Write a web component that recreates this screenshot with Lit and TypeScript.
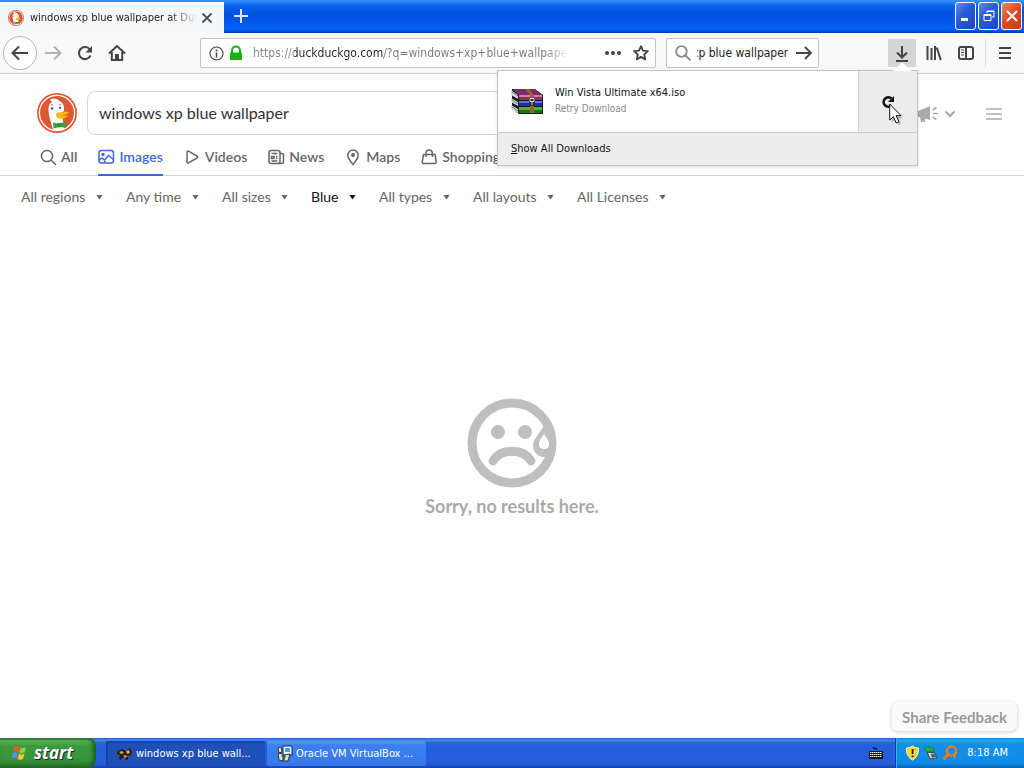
import { LitElement, html, css, svg } from "lit";
import { customElement, query } from "lit/decorators.js";
import { classMap } from "lit/directives/class-map.js";

const tabs = [
  { label: "All", icon: svg`<circle cx="7" cy="7" r="5.6"/><path d="M11 11l5 5"/>` },
  {
    label: "Images",
    active: true,
    icon: svg`<rect x="1" y="1.5" width="14.5" height="12.5" rx="2.5"/><circle cx="5" cy="5.5" r="1"/><path d="M1 11.5l3-2.5 2.5 2 4-4.5 5 4"/><path d="M5.5 13.5l2-1.5"/>`,
  },
  { label: "Videos", icon: svg`<path d="M3 3.2v9.6c0 1 .8 1.5 1.600 1l8.400-4.800c.9-.5.9-1.500 0-2L4.600 2.200C3.800 1.700 3 2.200 3 3.200z"/>` },
  {
    label: "News",
    icon: svg`<rect x="1" y="1.5" width="11" height="13" rx="2"/><path d="M12 4.500h2c1 0 1.500.5 1.500 1.500v6.500c0 1.200-.8 2-2 2H10M3.500 4.500h6M3.500 7.500h2.500v2H3.500zM8 7.500h1.500M8 9.500h1.500M3.500 12h6"/>`,
  },
  {
    label: "Maps",
    icon: svg`<path d="M8 15.500C5 12 2.800 9.300 2.800 6.300a5.200 5.200 0 0 1 10.400 0C13.200 9.300 11 12 8 15.500z"/><circle cx="8" cy="6" r="1.200" fill="currentColor"/>`,
  },
  {
    label: "Shopping",
    icon: svg`<path d="M2.500 5.500h11.500l1.300 7.500c.1.800-.4 1.500-1.300 1.500H2.500c-.9 0-1.400-.7-1.300-1.500z"/><path d="M5 8V4.500C5 2.500 6.300 1 8.200 1s3.200 1.500 3.200 3.500V8"/>`,
  },
];

const filters = ["All regions", "Any time", "All sizes", "Blue", "All types", "All layouts", "All Licenses"];

const duck = svg`
  <circle cx="20" cy="20" r="20" fill="#de5833"/>
  <circle cx="20" cy="20" r="18.300" fill="#fff"/>
  <circle cx="20" cy="20" r="17" fill="#de5833"/>
  <path d="M16 36.500C14.500 31 11.300 22 11.500 15.500c.1-3.500 1.500-5.500 3.500-6.500l-2-2.500c3.500-2 7.500-1 9.500 1.500 3 1.200 4.500 3.800 4.500 7.500 0 3-1.500 4.500-1.500 7.500 0 4 1.500 9 2 12.700-3.500 2-8 2.300-11.500.8z" fill="#fff"/>
  <circle cx="15" cy="15.500" r="1.200" fill="#2d4f8e"/><circle cx="23" cy="14.800" r="1.100" fill="#2d4f8e"/>
  <path d="M13.500 12.500c.8-.8 2-.9 2.700-.6M22 12c.7-.6 1.600-.5 2.200 0" fill="none" stroke="#5c76a8"/>
  <path d="M19 21.500c0-2 5-3 13-2.500-.8 1.900-4 2.600-7 3 2.500.8 4 .6 5.500.6-1 3-5.500 3.600-8.500 2.900-1.800-.4-3-2-3-4z" fill="#fdb813"/>
  <path d="M16 29.500l5.500 1.200 7.500-2 .5 6-7-.7-6 1.500z" fill="#3fa13f"/>
  <path d="M20.500 30.200h3v4h-3z" fill="#2e8532"/>`;

@customElement("app-root")
export class AppRoot extends LitElement {
  @query(".find-input") private findInput!: HTMLInputElement;

  static styles = css`
    :host {
      display: flex;
      flex-direction: column;
      height: 100vh;
      overflow: hidden;
      background: #fff;
      color: #222;
      font: 11px/16px "DejaVu Sans Condensed", "DejaVu Sans", sans-serif;
    }
    * { box-sizing: border-box; }
    button, input, select { font: inherit; color: inherit; border: 0; padding: 0; margin: 0; background: none; outline: none; }
    svg { display: block; flex: none; }
    .line { fill: none; stroke: currentColor; }

    .titlebar {
      display: flex;
      flex: none;
      height: 33px;
      padding-top: 2px;
      background: linear-gradient(#3a93ff 0, #2384fb 2px, #0663ea 6px, #0054e3 12px, #0055e8 20px, #0262f8 29px, #0050d8 31px, #003ab5 33px);
    }
    .tab { display: flex; align-items: center; width: 224px; padding: 0 9px 0 8px; background: #f6f7f9; color: #222; }
    .tab-title {
      flex: 1;
      margin: 0 3px 0 6px;
      white-space: nowrap;
      overflow: hidden;
      -webkit-mask-image: linear-gradient(to right, #000 140px, transparent 168px);
    }
    .close-tab, .new-tab { display: grid; place-items: center; }
    .close-tab { width: 16px; height: 16px; color: #444; }
    .new-tab { width: 34px; color: #d5e6ff; padding-bottom: 3px; }
    .window-buttons { display: flex; gap: 2px; margin-left: auto; padding-right: 2px; }
    .window-button {
      width: 21px;
      height: 28px;
      display: grid;
      place-items: center;
      color: #fff;
      border: 1px solid #fff;
      border-radius: 3px;
      background: linear-gradient(135deg, #5c8cf0, #2a5bdc 40%, #1b46c4);
    }
    .window-button.close { background: linear-gradient(135deg, #ee8a6c, #dc4d28 45%, #c23a16); }

    .toolbar {
      display: flex;
      flex: none;
      align-items: center;
      height: 41px;
      padding-left: 3px;
      background: #f9f9fa;
      border-bottom: 1px solid #d5d5d8;
      color: #444;
    }
    .tool { display: grid; place-items: center; width: 32px; height: 28px; flex: none; }
    .back { width: 34px; height: 34px; border: 1px solid #b4b4b6; border-radius: 50%; background: #fdfdfd; }
    .forward { color: #b0b0b0; }
    .stretch { flex: 0 1 67px; }
    .field { display: flex; align-items: center; height: 30px; border: 1px solid #c3c3c6; border-radius: 2px; background: #fff; }
    .address { flex: 1; min-width: 0; padding: 0 6px 0 8px; }
    .address-input {
      flex: 1;
      min-width: 0;
      height: 24px;
      margin: 0 32px 0 7px;
      font-size: 12px;
      color: transparent;
      background: linear-gradient(to right, #858585 41px, #222 41px, #222 131px, #777 131px, #777 292px, transparent 316px);
      -webkit-background-clip: text;
      background-clip: text;
    }
    .dots { margin-right: 12px; }
    .find { width: 153px; margin: 0 2px 0 10px; padding: 0 6px 0 8px; }
    .find-icon { color: #8a8a8a; }
    .find-input { flex: 1; min-width: 0; height: 24px; margin: 0 8px 0 6px; font-size: 12px; color: #222; }
    .downloads { position: relative; flex: none; margin-right: 2px; }
    .downloads-button { display: grid; place-items: center; width: 28px; height: 28px; background: #d5d5d6; }
    .menu { width: 39px; margin-left: 3px; border-left: 1px solid #dedee0; }

    .panel {
      position: absolute;
      z-index: 2;
      top: 31px;
      right: -2px;
      width: 421px;
      border: 1px solid #c4c4c4;
      background: #ededed;
      color: #111;
      box-shadow: 0 1px 3px #0002;
    }
    .panel::before {
      content: "";
      position: absolute;
      right: 6px;
      top: -9px;
      border: 9px solid transparent;
      border-top: 0;
      border-bottom-color: #fff;
    }
    .download { display: flex; align-items: stretch; height: 61px; background: #fff; }
    .archive { margin: 15px 11px 0 12px; }
    .download-text { flex: 1; padding-top: 14px; }
    .status { color: #8a8a8a; font-size: 10px; }
    .retry { display: grid; place-items: center; width: 59px; background: #ececec; border-left: 1px solid #cfcfcf; position: relative; }
    .pointer { position: absolute; left: 30px; top: 32px; }
    .show-all { display: block; width: 100%; height: 33px; padding: 0 13px; text-align: left; border-top: 1px solid #ccc; }

    main {
      flex: 1;
      display: flex;
      flex-direction: column;
      position: relative;
      min-height: 0;
      color: #666;
      font: 14px/20px Lato, "Open Sans", sans-serif;
    }
    .search-row { display: flex; align-items: center; padding: 17px 22px 0 37px; }
    .query { flex: 0 1 661px; height: 44px; margin-left: 10px; padding: 0 11px 2px; border: 1px solid #d6d6d6; border-radius: 8px; color: #333; font-size: 16px; }
    .page-tools { display: flex; align-items: center; margin: 2px 0 0 auto; color: #aaa; }
    .chevron { margin: 0 30px 0 4px; }
    nav { display: flex; gap: 21px; height: 41px; padding: 0 40px; border-bottom: 1px solid #d6d6d6; }
    nav a { display: flex; align-items: center; gap: 4px; height: 41px; padding-top: 5px; color: #666; font-weight: 600; text-decoration: none; border-bottom: 2px solid transparent; }
    nav a.active { color: #3f68da; border-color: #3969d5; }
    .filters { display: flex; gap: 23px; padding: 11px 21px 0; }
    .filters label { display: flex; align-items: center; gap: 10px; }
    .filters select { appearance: none; height: 20px; }
    .arrow { width: 7px; height: 5px; background: currentColor; clip-path: polygon(0 0, 100% 0, 50% 100%); }
    .blue { color: #111; }
    .empty { flex: 1; display: flex; flex-direction: column; align-items: center; justify-content: center; gap: 8px; color: #aaa; font-size: 18px; font-weight: 700; padding-bottom: 32px; }
    .empty p { margin: 0; }
    .feedback {
      position: absolute;
      right: 7px;
      bottom: 7px;
      height: 29px;
      padding: 0 10px;
      border-radius: 6px;
      background: #fafafa;
      color: #999;
      font-size: 15px;
      font-weight: 700;
      box-shadow: 0 1px 4px #0003;
    }

    footer {
      display: flex;
      flex: none;
      align-items: stretch;
      height: 30px;
      color: #fff;
      background: linear-gradient(#2358cc 0, #3f8cf3 2px, #2860dc 5px, #245edb 12px, #245edc 26px, #1941a5 30px);
    }
    .start {
      display: flex;
      align-items: center;
      gap: 5px;
      width: 96px;
      padding: 0 0 0 11px;
      border-radius: 0 8px 8px 0;
      background: linear-gradient(#2c7a2c 0, #5cb35a 3px, #3b9a3b 8px, #37943a 22px, #256c27 30px);
      box-shadow: inset -3px 0 4px #1d5c20;
      font: italic 700 17px/20px "Open Sans", sans-serif;
      text-shadow: 1px 1px 1px #123;
    }
    .tasks { display: flex; gap: 2px; padding: 3px 0 2px 10px; flex: 1; }
    .task { display: flex; align-items: center; gap: 3px; width: 159px; padding: 0 9px; border-radius: 2px; background: linear-gradient(#5a9bff, #3b80f0 4px, #3578ea); white-space: nowrap; }
    .task.pressed { padding-left: 10px; background: #1e50b8; box-shadow: inset 1px 1px 2px #123a8c; }
    .keyboard { align-self: center; margin-right: 12px; }
    .tray { display: flex; align-items: center; gap: 3px; padding: 0 16px 0 9px; border-left: 1px solid #0b3fa0; box-shadow: inset 1px 0 #35b5f5; background: linear-gradient(#0e7dd4 0, #18b0f5 2px, #1290e8 6px, #0f8ae6 25px, #0a5fb5 30px); }
    .clock { margin-left: 6px; white-space: nowrap; }
  `;

  protected firstUpdated() {
    this.findInput.scrollLeft = this.findInput.scrollWidth;
  }

  private renderTitlebar() {
    return html`<header class="titlebar">
      <div class="tab">
        <svg width="16" height="16" viewBox="0 0 40 40">${duck}</svg>
        <span class="tab-title">windows xp blue wallpaper at Duck</span>
        <button class="close-tab" aria-label="Close tab"><svg class="line" width="10" height="10" stroke-width="1.8"><path d="M.5.5l9 9M9.500.5l-9 9"/></svg></button>
      </div>
      <button class="new-tab" aria-label="New tab"><svg class="line" width="14" height="14" stroke-width="2"><path d="M7 0v14M0 7h14"/></svg></button>
      <div class="window-buttons">
        <button class="window-button" aria-label="Minimize"><svg width="14" height="14"><path d="M2 9h7v3H2z" fill="#fff"/></svg></button>
        <button class="window-button" aria-label="Restore"><svg class="line" width="14" height="14"><path d="M5 4V2h7v6h-2M5 2.500h7M2 5.500h7v6H2zM2 6.500h7"/></svg></button>
        <button class="window-button close" aria-label="Close"><svg class="line" width="14" height="14" stroke-width="2"><path d="M2 2l10 10M12 2L2 12"/></svg></button>
      </div>
    </header>`;
  }

  private renderPanel() {
    return html`<section class="panel" aria-label="Downloads">
      <div class="download">
        <svg class="archive" width="34" height="31" viewBox="0 0 34 31">
          <path d="M2 3h23l8 6v19H9l-7-5z" fill="#1b1620"/>
          <path d="M1 4l7 5v4L1 9zM1 12l7 4v4l-7-4zM1 19l7 4v4l-7-4z" fill="#d5d5d5"/>
          <path d="M2 6l6 4M2 14l6 4M2 21l6 4" stroke="#777"/>
          <path d="M2 3h23l7 6H9z" fill="#7a2a66"/><path d="M9 9h23v2H9z" fill="#d07ab5"/><path d="M9 11h23v3H9z" fill="#8e2c72"/>
          <path d="M9 15h23v2H9z" fill="#5576f0"/><path d="M9 17h23v3H9z" fill="#1e2fae"/>
          <path d="M9 21h23v3H9z" fill="#41b83a"/><path d="M9 24h23v3H9z" fill="#157517"/>
          <path d="M15 3h4l5 6v18h-4V9z" fill="#9a6233"/>
          <path d="M19 12h6v8h-6z" fill="#2b2b2b"/><path d="M20 12.500h4v3h-4zM22 15v4" fill="none" stroke="#ddd"/>
        </svg>
        <div class="download-text">
          <div>Win Vista Ultimate x64.iso</div>
          <div class="status">Retry Download</div>
        </div>
        <button class="retry" aria-label="Retry download">
          <svg class="line" width="14" height="14" stroke-width="2.600"><path d="M10.500 10.500a4.700 4.700 0 1 1 0-7"/><path d="M13 1v6H7z" fill="#111" stroke="none"/></svg>
          <svg class="pointer" width="14" height="22"><path d="M2.500 3v17l4-3.500 2.800 5.500 3-1.500-2.800-5h4z" fill="#0003"/><path d="M.7 1v16l3.700-3.300 2.800 6.300 2.800-1.300-2.800-6H12z" fill="#fff" stroke="#111"/></svg>
        </button>
      </div>
      <button class="show-all"><u>S</u>how All Downloads</button>
    </section>`;
  }

  private renderToolbar() {
    return html`<div class="toolbar">
      <button class="tool back" aria-label="Back"><svg class="line" width="18" height="16" stroke-width="2"><path d="M17 8H2M8 1.500L1.500 8 8 14.500"/></svg></button>
      <button class="tool forward" aria-label="Forward"><svg class="line" width="18" height="16" stroke-width="2"><path d="M1 8h15M10 1.500L16.500 8 10 14.500"/></svg></button>
      <button class="tool" aria-label="Reload"><svg class="line" width="16" height="16" stroke-width="2"><path d="M13.500 10.500a6 6 0 1 1-.7-6"/><path d="M15 1v6.500H8.500z" fill="currentColor" stroke="none"/></svg></button>
      <button class="tool" aria-label="Home"><svg class="line" width="18" height="18" stroke-width="2"><path d="M1 9.500L9 2l8 7.500M3.800 8v8h10.400V8" /><path d="M7 10h4v6H7z" fill="currentColor" stroke="none"/></svg></button>
      <div class="stretch"></div>
      <div class="field address">
        <svg class="line" width="15" height="15"><circle cx="7.500" cy="7.500" r="6.500" stroke-width="1.200"/><path d="M7.500 6.500v5M7.500 3.500v2" stroke-width="1.600"/></svg>
        <svg width="22" height="16"><path d="M8 8V5.500a4 4 0 0 1 8 0V8" fill="none" stroke="#12b312" stroke-width="2"/><path d="M6 7.500h12V15H6z" fill="#12b312"/></svg>
        <input class="address-input" aria-label="Address" value="https://duckduckgo.com/?q=windows+xp+blue+wallpaper" />
        <svg class="dots" width="16" height="6" fill="currentColor"><circle cx="2" cy="3" r="2"/><circle cx="8" cy="3" r="2"/><circle cx="14" cy="3" r="2"/></svg>
        <svg class="line" width="16" height="16" stroke-width="1.800" stroke-linejoin="round"><path d="M8 1.200l2 4.500 4.900.5-3.700 3.300 1.100 4.900L8 11.900l-4.300 2.500 1.100-4.900L1.100 6.200l4.900-.5z"/></svg>
      </div>
      <div class="field find">
        <svg class="line find-icon" width="16" height="16" stroke-width="1.800"><circle cx="6.500" cy="6.500" r="5.300"/><path d="M10.500 10.500l5 5"/></svg>
        <input class="find-input" aria-label="Search the web" value="windows xp blue wallpaper" />
        <svg class="line" width="16" height="14" stroke-width="1.800"><path d="M0 7h15M9 1l6 6-6 6"/></svg>
      </div>
      <div class="stretch"></div>
      <div class="downloads">
        <button class="downloads-button" aria-label="Downloads"><svg class="line" width="14" height="17" stroke-width="2"><path d="M7 1v11M2 7.500l5 5 5-5M1 16h12"/></svg></button>
        ${this.renderPanel()}
      </div>
      <button class="tool" aria-label="Library"><svg class="line" width="16" height="16" stroke-width="2"><path d="M1.500 1v14M5.500 3v12M9 1v14M10.800 2.500l4 12.500"/></svg></button>
      <button class="tool" aria-label="Sidebars"><svg class="line" width="16" height="14" stroke-width="2"><rect x="1" y="1" width="14" height="12" rx="2"/><path d="M8 1v12"/><path d="M3 4h3M3 6.500h3M3 9h3" stroke-width="1"/></svg></button>
      <button class="tool menu" aria-label="Menu"><svg class="line" width="12" height="12" stroke-width="2"><path d="M0 1h12M0 6h12M0 11h12"/></svg></button>
    </div>`;
  }

  private renderPage() {
    return html`<main>
      <div class="search-row">
        <svg width="40" height="40" viewBox="0 0 40 40">${duck}</svg>
        <input class="query" aria-label="Search" value="windows xp blue wallpaper" />
        <div class="page-tools">
          <svg width="24" height="18" viewBox="0 0 24 18" fill="currentColor"><path d="M1 6.500L14 1v14L1 11.500zM4 12l5 1.500V17H5z"/><path d="M16.500 5l4-2.500M17 8.500h5M16.500 12l4 2.500" fill="none" stroke="currentColor" stroke-width="1.500"/></svg>
          <svg class="line chevron" width="12" height="8" stroke-width="2"><path d="M1.500 1.500L6 6l4.500-4.500"/></svg>
          <svg class="line" width="16" height="12" stroke-width="1.600"><path d="M0 1h16M0 6h16M0 11h16"/></svg>
        </div>
      </div>
      <nav>
        ${tabs.map(
          (t) => html`<a href="#" class=${classMap({ active: !!t.active })}><svg class="line" width="17" height="17" stroke-width="1.5">${t.icon}</svg>${t.label}</a>`
        )}
      </nav>
      <div class="filters">
        ${filters.map(
          (f) => html`<label class=${classMap({ blue: f === "Blue" })}><select aria-label=${f}><option>${f}</option></select><span class="arrow"></span></label>`
        )}
      </div>
      <div class="empty">
        <svg width="90" height="90" viewBox="0 0 90 90">
          <circle cx="45" cy="45" r="40" fill="none" stroke="#bfbfbf" stroke-width="9"/>
          <path d="M77 28c-5 8-11 13-11 20 0 6 5 11 11 11 6 0 10-4 10-9 0-8-5-15-10-22z" fill="#bfbfbf"/>
          <path d="M77 36c-3 4-5 7-5 10 0 3 2 5 5 5s5-2 5-5c0-3-2-6-5-10z" fill="#fff"/>
          <circle cx="31" cy="34" r="7" fill="#bfbfbf"/><circle cx="58" cy="34" r="7" fill="#bfbfbf"/>
          <path d="M26 63c8-13 30-13 38 0" fill="none" stroke="#bfbfbf" stroke-width="9" stroke-linecap="round"/>
        </svg>
        <p>Sorry, no results here.</p>
      </div>
      <button class="feedback">Share Feedback</button>
    </main>`;
  }

  private renderTaskbar() {
    return html`<footer>
      <button class="start">
        <svg width="18" height="18" viewBox="0 0 18 18"><path d="M3.500 2.500c2-1 3.500-.8 5 .2L7.300 8C5.800 7 4.200 7 2.200 7.800z" fill="#ee5a2b"/><path d="M9.500 3.200c1.700 1 3.500 1 5.500 0l-1.300 5.300c-2 .9-3.700.9-5.300 0z" fill="#8ccf3f"/><path d="M2 9c1.900-.8 3.500-.8 5 .2l-1.300 5.300c-1.500-1-3-1-5-.2z" fill="#5b8cf0"/><path d="M8 9.700c1.700 1 3.400 1 5.400 0L12 15c-1.900 1-3.700 1-5.300 0z" fill="#fbc928"/></svg>
        start
      </button>
      <div class="tasks">
        <button class="task pressed">
          <svg width="17" height="16"><path d="M1 6l5-3 4 2 4-3 2 4-1 3-3 1v3l-2 1-1-3-3 1-1 2-2-1 1-4-3-1z" fill="#2b1d12"/><path d="M3 6l3-1 2 2-3 1zM10 5l3-1 1 3-3 1zM7 9l5 1-3 2z" fill="#e9a23a"/></svg>
          windows xp blue wall...
        </button>
        <button class="task">
          <svg width="17" height="17"><path d="M7 1h9v9H7z" fill="#e8f2ff" stroke="#225"/><path d="M9 3h5v4H9z" fill="#4aa0e8"/><path d="M2 3l3-1 1 5-3 1z" fill="#eee" stroke="#333"/><path d="M2 8l5 1v7l-4-1zM8 10l6-1-2 7-4 0z" fill="#ddd" stroke="#333"/><path d="M5 10l5 1-2 4z" fill="#2a6a3a"/></svg>
          Oracle VM VirtualBox ...
        </button>
      </div>
      <svg class="keyboard" width="14" height="12"><path d="M4 0l1 2 2-1 1 2" fill="none" stroke="#111"/><path d="M0 4h14v8H0z" fill="#111"/><path d="M1 5.500h12M1 7.500h12M1 9.500h12" stroke="#fff" stroke-dasharray="1.500 .5"/></svg>
      <div class="tray">
        <svg width="15" height="16"><path d="M7.500 1c2 1.500 4 2 6 2 .3 5-1.500 9.500-6 12C3 12.500 1.200 8 1.500 3c2 0 4-.5 6-2z" fill="#f7d530" stroke="#fff8c0"/><path d="M6.700 4h1.800v5H6.700zM6.700 10.500h1.800v1.800H6.700z" fill="#222"/></svg>
        <svg width="16" height="16"><path d="M4 7l8 1 2 5-7 1z" fill="#c8d0d8" stroke="#344"/><path d="M1 4l5-3v2h5v3H6v2z" fill="#2fae3c" stroke="#176a20" stroke-width=".6"/><path d="M8 9l4 .5.8 2.500-4 .5z" fill="#455"/></svg>
        <svg width="16" height="16" fill="none" stroke="#ee7b1a"><circle cx="9.500" cy="6" r="4.600" stroke-width="2.400"/><path d="M6 9.500L1.500 14.500" stroke-width="3"/><path d="M12.500 9.500v4" stroke-width="2"/></svg>
        <span class="clock">8:18 AM</span>
      </div>
    </footer>`;
  }

  render() {
    return html`${this.renderTitlebar()}${this.renderToolbar()}${this.renderPage()}${this.renderTaskbar()}`;
  }
}
